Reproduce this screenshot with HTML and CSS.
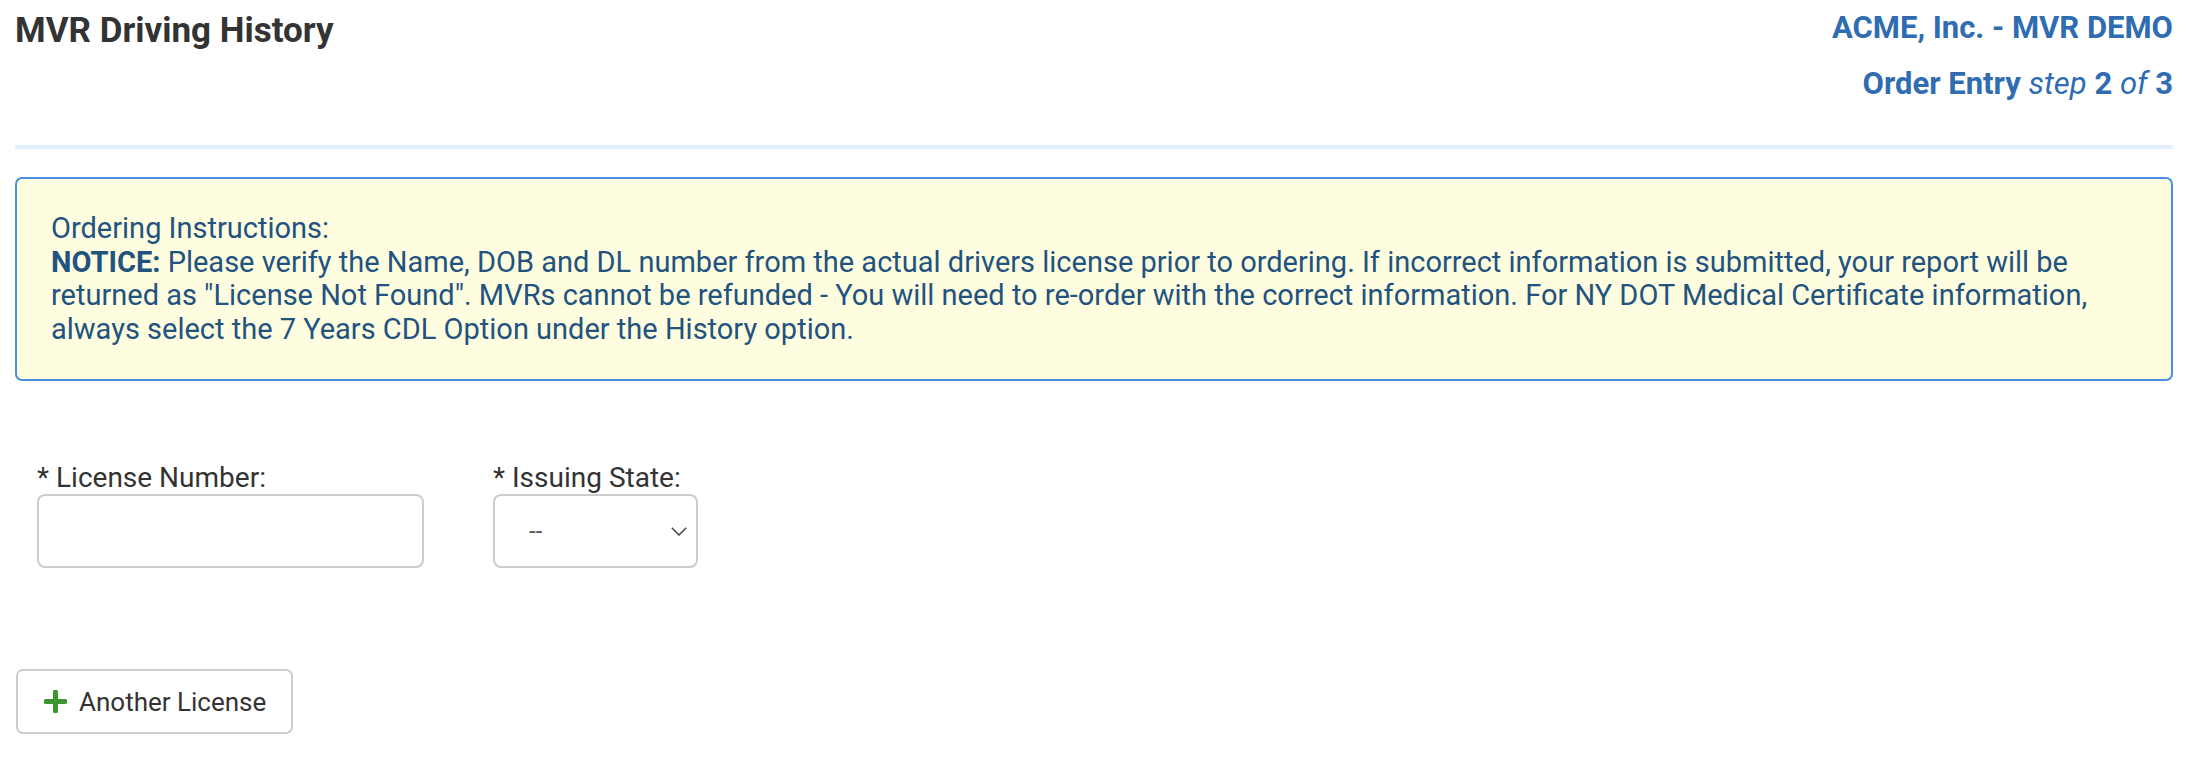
FILE: index.html
```html
<!DOCTYPE html>
<html>
<head>
    <title>MVR Driving History</title>
    <meta name="viewport" content="width=device-width, initial-scale=1"/>
    <link rel="stylesheet" href="styles.css">
</head>
<body>
<div class="page">
    <div class="header">
        <h2 class="title">MVR Driving History</h2>
        <div class="crumbs">
            <div>ACME, Inc. - MVR DEMO</div>
            <div>Order Entry <i class="light">step</i> 2 <i class="light">of</i> 3</div>
        </div>
    </div>

    <div class="notice">
        Ordering Instructions:<br>
        <b>NOTICE:</b> Please verify the Name, DOB and DL number from the actual drivers license prior to ordering. If incorrect information is submitted, your report will be returned as "License Not Found". MVRs cannot be refunded - You will need to re-order with the correct information. For NY DOT Medical Certificate information,<br>
        always select the 7 Years CDL Option under the History option.
    </div>

    <div class="fields">
        <div class="field">
            <label for="licNum">* License Number:</label>
            <input type="text" id="licNum" class="lic-input">
        </div>
        <div class="field">
            <label for="licState">* Issuing State:</label>
            <select id="licState" class="state-select">
                <option>--</option>
            </select>
        </div>
    </div>

    <button type="button" class="add-btn">
        <svg width="23" height="23" viewBox="0 0 23 23"><path d="M11.5 2v19M2 11.5h19" stroke="#3b962f" stroke-width="5" stroke-linecap="round"/></svg>
        Another License
    </button>
</div>
</body>
</html>
```

FILE: styles.css
```css
body {
    margin: 0;
    font-family: Roboto, "Liberation Sans", Arial, sans-serif;
    color: #333333;
    background: #ffffff;
}

.page {
    padding: 0 25px 0 15px;
}

.header {
    display: flex;
    justify-content: space-between;
    align-items: flex-start;
    padding-bottom: 33px;
    border-bottom: 4px solid #e2eefc;
}

.title {
    margin: 0;
    padding-top: 3px;
    font-size: 35px;
    line-height: 56px;
    font-weight: bold;
    color: #333333;
}

.crumbs {
    text-align: right;
    font-size: 31px;
    line-height: 56px;
    font-weight: bold;
    color: #2f6cb1;
}

.crumbs .light {
    font-weight: normal;
}

.notice {
    margin-top: 28px;
    border: 2px solid #4a90e2;
    border-radius: 7px;
    background-color: #fefde0;
    padding: 33px 34px;
    font-size: 29px;
    line-height: 33.6px;
    color: #22537f;
}

.fields {
    display: flex;
    gap: 69px;
    margin-top: 81px;
    padding-left: 22px;
}

.field label {
    display: block;
    font-size: 28px;
    line-height: 32px;
    color: #333333;
}

.lic-input,
.state-select {
    box-sizing: border-box;
    height: 74px;
    border: 2px solid #cccccc;
    border-radius: 8px;
    background-color: #ffffff;
    font-family: inherit;
    font-size: 24px;
}

.lic-input {
    width: 387px;
    padding: 0 12px;
}

.state-select {
    width: 205px;
    padding: 0 34px;
    color: #555555;
    -webkit-appearance: none;
    appearance: none;
    background-image: url("data:image/svg+xml;utf8,<svg xmlns='http://www.w3.org/2000/svg' width='16' height='9' viewBox='0 0 16 9'><path d='M0.8 0.8L8 8L15.2 0.8' fill='none' stroke='%23444' stroke-width='1.5'/></svg>");
    background-repeat: no-repeat;
    background-position: right 9px center;
}

.add-btn {
    display: flex;
    align-items: center;
    gap: 12px;
    box-sizing: border-box;
    width: 277px;
    height: 65px;
    margin: 101px 0 0 1px;
    padding: 0 20px 0 26px;
    border: 2px solid #cccccc;
    border-radius: 7px;
    background: #ffffff;
    font-family: inherit;
    font-size: 26px;
    color: #333333;
    cursor: pointer;
}
```
